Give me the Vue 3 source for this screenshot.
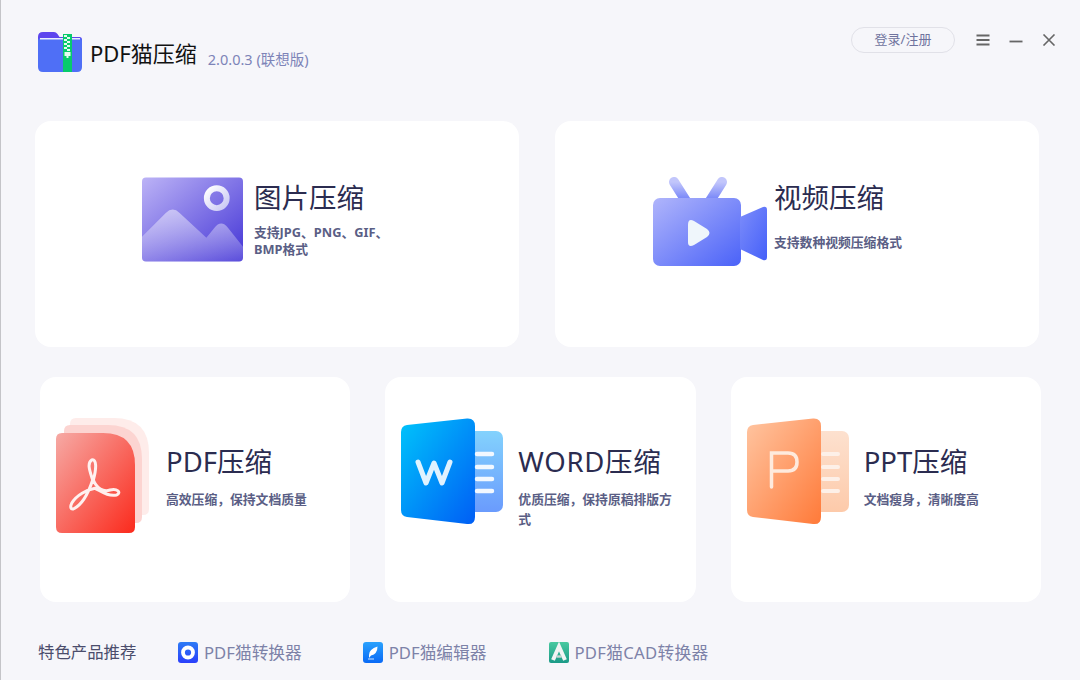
<template>
  <div class="page">
    <header class="header">
      <div class="brand">
        <svg class="logo" width="46" height="42" viewBox="0 0 46 42" aria-hidden="true">
          <path d="M1 6q0-5 5-5h11q2 0 3.500 2l2 3h20q2.500 0 2.500 3v3h-44z" fill="#5d45ee" />
          <path d="M1 10q0-3 3-3h38q3 0 3 3v26q0 5-5 5h-34q-5 0-5-5z" fill="#4f6ff6" />
          <rect x="3" y="7" width="40" height="1.500" fill="#e9edff" />
          <rect x="26" y="3" width="9" height="38" fill="#07cb6c" />
          <path d="M27 4h3v2h-3zM30 6h3v2h-3zM27 8h3v2h-3zM30 10h3v2h-3zM27 12h3v2h-3zM30 14h3v2h-3zM27 16h3v2h-3zM30 18h3v2h-3z" fill="#e6fbf0" />
          <path d="M27.500 21h6v4h-2v2h-2v-2h-2z" fill="#e6fbf0" />
        </svg>
        <span class="brand-name">PDF猫压缩</span>
        <span class="version">2.0.0.3 (联想版)</span>
      </div>
      <div class="actions">
        <button type="button" class="login-btn">登录/注册</button>
        <svg class="win-icon" width="14" height="12" viewBox="0 0 14 12" aria-label="菜单">
          <path d="M0.500 1.500h13M0.500 6h13M0.500 10.500h13" stroke="#666" stroke-width="2" fill="none" />
        </svg>
        <svg class="win-icon" width="14" height="12" viewBox="0 0 14 12" aria-label="最小化">
          <path d="M0.500 7.500h13" stroke="#666" stroke-width="1.800" fill="none" />
        </svg>
        <svg class="win-icon" width="14" height="12" viewBox="0 0 14 12" aria-label="关闭">
          <path d="M1.500 0.500l11 11M12.500 0.500l-11 11" stroke="#666" stroke-width="1.600" fill="none" />
        </svg>
      </div>
    </header>

    <section class="row-large">
      <div class="card card-large card-image">
        <svg width="101" height="85" viewBox="0 0 102 85" aria-hidden="true">
          <defs>
            <linearGradient id="imgBg" x1="0" y1="0" x2="1" y2="1">
              <stop offset="0" stop-color="#bcb3f6" />
              <stop offset="1" stop-color="#4334d6" />
            </linearGradient>
            <linearGradient id="imgHill" x1="0" y1="0" x2="0" y2="1">
              <stop offset="0" stop-color="#fff" stop-opacity=".5" />
              <stop offset="1" stop-color="#fff" stop-opacity=".12" />
            </linearGradient>
            <linearGradient id="imgRing" x1="0" y1="0" x2="1" y2="1">
              <stop offset="0" stop-color="#fff" />
              <stop offset="1" stop-color="#c9c8f4" />
            </linearGradient>
          </defs>
          <rect width="102" height="85" rx="4" fill="url(#imgBg)" />
          <path d="M0 60L24 36Q31 29 38 36L65 61L73 51Q80 42 87 51L102 70V81Q102 85 98 85H4Q0 85 0 81Z" fill="url(#imgHill)" />
          <circle cx="75.500" cy="21" r="10" fill="none" stroke="url(#imgRing)" stroke-width="6" />
        </svg>
        <div class="card-text">
          <h2>图片压缩</h2>
          <p class="desc desc-image">支持JPG、PNG、GIF、BMP格式</p>
        </div>
      </div>
      <div class="card card-large card-video">
        <svg width="114" height="89" viewBox="0 0 114 89" aria-hidden="true">
          <defs>
            <linearGradient id="vidBody" x1="0" y1="0" x2="1" y2="1">
              <stop offset="0" stop-color="#b0b5fb" />
              <stop offset="1" stop-color="#4a62f8" />
            </linearGradient>
            <linearGradient id="vidLens" x1="0" y1="0" x2="1" y2="1">
              <stop offset="0" stop-color="#7d8dfa" />
              <stop offset="1" stop-color="#4560f9" />
            </linearGradient>
            <linearGradient id="vidAnt" x1="0" y1="0" x2="0" y2="1">
              <stop offset="0" stop-color="#c2c6fb" />
              <stop offset="1" stop-color="#6f7ff8" />
            </linearGradient>
          </defs>
          <path d="M21 5L33 24M69 5L57 24" stroke="url(#vidAnt)" stroke-width="10" stroke-linecap="round" fill="none" />
          <rect y="21" width="88" height="68" rx="7" fill="url(#vidBody)" />
          <path d="M87 40L110 30Q114 29 114 33V80Q114 84 110 83L87 72Z" fill="url(#vidLens)" />
          <path d="M35 48Q35 41 41 44L54 52Q59 56 54 60L41 68Q35 71 35 65Z" fill="#eff6fb" />
        </svg>
        <div class="card-text">
          <h2>视频压缩</h2>
          <p class="desc desc-video">支持数种视频压缩格式</p>
        </div>
      </div>
    </section>

    <section class="row-small">
      <div class="card card-small card-pdf">
        <svg width="93" height="115" viewBox="0 0 93 115" aria-hidden="true">
          <defs>
            <linearGradient id="pdfBg" x1="0" y1="0" x2="1" y2="1">
              <stop offset="0" stop-color="#f6aaa5" />
              <stop offset="1" stop-color="#fb2a1c" />
            </linearGradient>
          </defs>
          <path d="M14 6Q14 0 20 0H58Q93 0 93 35V91Q93 97 87 97H20Q14 97 14 91Z" fill="#feecea" />
          <path d="M8 13Q8 7 14 7H52Q86 7 86 41V99Q86 105 80 105H14Q8 105 8 99Z" fill="#fcd4d1" />
          <path d="M0 21Q0 15 6 15H47Q79 15 79 47V109Q79 115 73 115H6Q0 115 0 109Z" fill="url(#pdfBg)" />
          <g transform="translate(-16 -13) scale(.3333)">
            <path d="M100 312C125 300 145 265 158 225C150 200 140 175 155 165C170 160 170 190 160 225C170 250 190 262 210 255C232 250 245 262 230 270C205 275 185 260 165 250C140 255 110 270 95 295C90 305 92 314 100 312Z" fill="none" stroke="#fff" stroke-opacity=".9" stroke-width="9" stroke-linejoin="round" />
          </g>
        </svg>
        <div class="card-text">
          <h2>PDF压缩</h2>
          <p class="desc">高效压缩，保持文档质量</p>
        </div>
      </div>
      <div class="card card-small card-word">
        <svg width="103" height="107" viewBox="0 0 103 107" aria-hidden="true">
          <defs>
            <linearGradient id="wordBack" x1="0" y1="0" x2="0" y2="1">
              <stop offset="0" stop-color="#83d2fd" />
              <stop offset="1" stop-color="#6a9bfd" />
            </linearGradient>
            <linearGradient id="wordFront" x1="0" y1="0" x2="1" y2="1">
              <stop offset="0" stop-color="#00c4fb" />
              <stop offset="1" stop-color="#005ef5" />
            </linearGradient>
          </defs>
          <rect x="60" y="13" width="42" height="81" rx="7" fill="url(#wordBack)" />
          <path d="M0 14Q0 8 6 7L66 0.500Q74 0 74 8V99Q74 107 66 106L6 99Q0 98 0 92Z" fill="url(#wordFront)" />
          <path d="M17 44L25 65L33 45L41 65L49 44" fill="none" stroke="#fff" stroke-opacity=".88" stroke-width="5" stroke-linecap="round" stroke-linejoin="round" />
          <path d="M76 36H91M76 49H91M76 61H91M76 73H91" stroke="#f2f8ff" stroke-width="4.500" stroke-linecap="round" />
        </svg>
        <div class="card-text">
          <h2>WORD压缩</h2>
          <p class="desc desc-word">优质压缩，保持原稿排版方式</p>
        </div>
      </div>
      <div class="card card-small card-ppt">
        <svg width="103" height="107" viewBox="0 0 103 107" aria-hidden="true">
          <defs>
            <linearGradient id="pptBack" x1="0" y1="0" x2="0" y2="1">
              <stop offset="0" stop-color="#fde1cf" />
              <stop offset="1" stop-color="#fdcaaa" />
            </linearGradient>
            <linearGradient id="pptFront" x1="0" y1="0" x2="1" y2="1">
              <stop offset="0" stop-color="#ffc5a1" />
              <stop offset="1" stop-color="#ff7a39" />
            </linearGradient>
          </defs>
          <rect x="60" y="13" width="42" height="81" rx="7" fill="url(#pptBack)" />
          <path d="M0 14Q0 8 6 7L66 0.500Q74 0 74 8V99Q74 107 66 106L6 99Q0 98 0 92Z" fill="url(#pptFront)" />
          <path d="M24.500 69V35H41Q50 35 50 44T41 53H24.500" fill="none" stroke="#feeadd" stroke-width="3.500" stroke-linecap="round" />
          <path d="M76 36H91M76 49H91M76 61H91M76 73H91" stroke="#fdf0e8" stroke-width="4" stroke-linecap="round" />
        </svg>
        <div class="card-text">
          <h2>PPT压缩</h2>
          <p class="desc">文档瘦身，清晰度高</p>
        </div>
      </div>
    </section>

    <footer class="footer">
      <span class="footer-title">特色产品推荐</span>
      <a class="product product-convert">
        <svg width="20" height="21" viewBox="0 0 20 21" aria-hidden="true">
          <defs>
            <linearGradient id="pConv" x1="0" y1="0" x2="0" y2="1">
              <stop offset="0" stop-color="#2d7bf5" />
              <stop offset="1" stop-color="#2a3ffb" />
            </linearGradient>
          </defs>
          <rect width="20" height="21" rx="3" fill="url(#pConv)" />
          <circle cx="10" cy="10.500" r="5" fill="none" stroke="#fff" stroke-width="3.800" />
        </svg>
        <span>PDF猫转换器</span>
      </a>
      <a class="product product-edit">
        <svg width="20" height="21" viewBox="0 0 20 21" aria-hidden="true">
          <defs>
            <linearGradient id="pEdit" x1="0" y1="0" x2="0" y2="1">
              <stop offset="0" stop-color="#2aa2fd" />
              <stop offset="1" stop-color="#0a6af6" />
            </linearGradient>
          </defs>
          <rect width="20" height="21" rx="3" fill="url(#pEdit)" />
          <path d="M6 13Q6 7 14.500 4.500Q14.500 12 8 13.500L6 16Z" fill="#fff" />
          <path d="M5 17H11" stroke="#cfe6ff" stroke-width="1" />
        </svg>
        <span>PDF猫编辑器</span>
      </a>
      <a class="product product-cad">
        <svg width="20" height="21" viewBox="0 0 20 21" aria-hidden="true">
          <defs>
            <linearGradient id="pCad" x1="0" y1="0" x2="0" y2="1">
              <stop offset="0" stop-color="#49c9a0" />
              <stop offset="1" stop-color="#1b9a87" />
            </linearGradient>
          </defs>
          <rect width="20" height="21" rx="2" fill="url(#pCad)" />
          <path d="M4 18L10 4.500L16 18" fill="none" stroke="#f2f4f4" stroke-width="4" />
          <path d="M7.500 14.500H12.500" stroke="#c9d4d2" stroke-width="2.400" />
        </svg>
        <span>PDF猫CAD转换器</span>
      </a>
    </footer>
  </div>
</template>

<script setup>
</script>

<style>
body {
  margin: 0;
  background: #f6f6fa;
}
</style>

<style scoped>
.page {
  width: 1080px;
  height: 680px;
  box-sizing: border-box;
  overflow: hidden;
  background: #f6f6fa;
  border-left: 1px solid #c4c4c8;
  font-family: "Noto Sans", "Noto Sans CJK SC", sans-serif;
}

.header {
  height: 121px;
  box-sizing: border-box;
  display: flex;
  justify-content: space-between;
  align-items: flex-start;
  padding: 27px 24px 0 36px;
}

.brand {
  display: flex;
  align-items: flex-start;
  padding-top: 4px;
}

.logo {
  margin-right: 7px;
}

.brand-name {
  color: #111;
  font-size: 22px;
  line-height: 44px;
}

.version {
  margin: 18px 0 0 11px;
  color: #7d84b8;
  font-size: 14.500px;
  line-height: 20px;
}

.actions {
  display: flex;
  align-items: center;
  gap: 19px;
}

.login-btn {
  width: 104px;
  height: 26px;
  margin-right: 2px;
  padding: 0 0 2px;
  border: 1px solid #e1e1e8;
  border-radius: 13px;
  background: transparent;
  color: #6f739e;
  font-family: inherit;
  font-size: 13px;
  line-height: 1;
}

.row-large {
  display: grid;
  grid-template-columns: repeat(2, 1fr);
  gap: 36px;
  width: 1004px;
  margin-left: 34px;
}

.row-small {
  display: grid;
  grid-template-columns: repeat(3, 1fr);
  gap: 35px;
  width: 1001px;
  margin: 30px 0 0 39px;
}

.card {
  display: flex;
  align-items: flex-start;
  box-sizing: border-box;
  border-radius: 16px;
  background: #fff;
}

.card svg {
  flex: none;
}

.card-large {
  height: 226px;
  padding: 56px 0 0 107px;
}

.card-large .card-text {
  padding-top: 1px;
}

.card-small {
  height: 225px;
  padding: 41px 0 0 16px;
}

.card-image .card-text {
  margin-left: 11px;
}

.card-video {
  padding-left: 98px;
}

.card-video .card-text {
  margin-left: 7px;
}

.card-pdf .card-text {
  margin-left: 17px;
}

.card-word,
.card-ppt {
  padding-left: 16px;
}

.card-word .card-text,
.card-ppt .card-text {
  margin-left: 14px;
}

.card-word h2 {
  letter-spacing: 0.7px;
}

.card-small .card-text {
  padding-top: 24px;
}

h2 {
  margin: 0;
  color: #2b2c50;
  font-size: 27.500px;
  line-height: 40px;
  font-weight: 400;
}

.desc {
  margin: 7px 0 0;
  color: #5a5e85;
  font-size: 12.800px;
  line-height: 20px;
  font-weight: 700;
}

.desc-image {
  width: 150px;
  margin-top: 6px;
  line-height: 17px;
}

.desc-video {
  margin-top: 15px;
  line-height: 18px;
}

.desc-word {
  width: 158px;
}

.footer {
  display: flex;
  align-items: center;
  padding: 39px 0 0 37px;
  height: 21px;
}

.footer-title {
  color: #4b4d6c;
  font-size: 16.400px;
  line-height: 21px;
  width: 140px;
}

.product {
  display: flex;
  align-items: center;
  gap: 6px;
  margin-top: 2px;
  color: #7d82a8;
  font-size: 16.700px;
  line-height: 21px;
}

.product-edit {
  margin-left: 61px;
}

.product-cad {
  gap: 5px;
  margin-left: 63px;
}

.product-cad span {
  letter-spacing: 0.3px;
}
</style>
